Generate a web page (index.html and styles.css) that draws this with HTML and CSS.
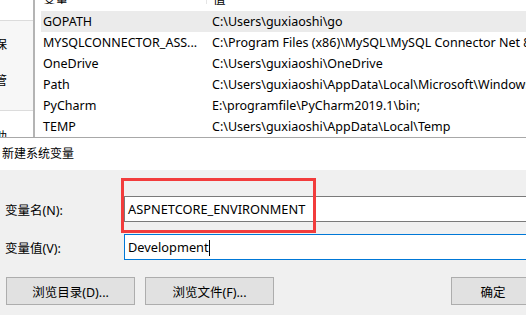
FILE: index.html
```html
<!DOCTYPE html>
<html lang="zh-CN">
<head>
    <meta charset="UTF-8">
    <title>新建系统变量</title>
    <link rel="stylesheet" href="styles.css">
</head>
<body>
    <div class="behind">
        <div class="side">
            <div class="side-top"></div>
            <div class="side-mid">
                <span class="cut c1">保</span>
                <span class="cut c2">管</span>
            </div>
            <div class="side-low">
                <span class="cut c3">助</span>
            </div>
        </div>
        <div class="gutter"></div>
        <div class="list">
            <div class="list-head">
                <span class="col-name">变量</span>
                <span class="col-value">值</span>
            </div>
            <div class="row selected"><span class="col-name">GOPATH</span><span class="col-value">C:\Users\guxiaoshi\go</span></div>
            <div class="row"><span class="col-name">MYSQLCONNECTOR_ASS...</span><span class="col-value">C:\Program Files (x86)\MySQL\MySQL Connector Net 8.0.16\Assemblies</span></div>
            <div class="row"><span class="col-name">OneDrive</span><span class="col-value">C:\Users\guxiaoshi\OneDrive</span></div>
            <div class="row"><span class="col-name">Path</span><span class="col-value">C:\Users\guxiaoshi\AppData\Local\Microsoft\WindowsApps;</span></div>
            <div class="row"><span class="col-name">PyCharm</span><span class="col-value">E:\programfile\PyCharm2019.1\bin;</span></div>
            <div class="row"><span class="col-name">TEMP</span><span class="col-value">C:\Users\guxiaoshi\AppData\Local\Temp</span></div>
        </div>
    </div>

    <div class="dialog">
        <div class="title-bar">新建系统变量</div>
        <div class="dialog-body">
            <div class="field">
                <label class="field-label">变量名(N):</label>
                <div class="input">ASPNETCORE_ENVIRONMENT</div>
            </div>
            <div class="field">
                <label class="field-label">变量值(V):</label>
                <div class="input focused">Development<span class="caret"></span></div>
            </div>
            <div class="buttons">
                <button class="btn">浏览目录(D)...</button>
                <button class="btn">浏览文件(F)...</button>
                <button class="btn btn-ok">确定</button>
            </div>
            <div class="highlight"></div>
        </div>
    </div>
</body>
</html>
```

FILE: styles.css
```css
body {
    margin: 0;
    width: 526px;
    height: 315px;
    overflow: hidden;
    font-family: "Noto Sans", "Noto Sans CJK SC", sans-serif;
    font-size: 12px;
    color: #000;
    background-color: #fff;
}

/* window behind the dialog */
.behind {
    display: flex;
    height: 137px;
    border-bottom: 1px solid #a8a8a8;
    overflow: hidden;
}

.side {
    width: 33px;
    border-right: 2px solid #b4b4b4;
    display: flex;
    flex-direction: column;
    overflow: hidden;
}

.side-top {
    height: 20px;
    border-bottom: 1px solid #dcdcdc;
}

.side-mid {
    height: 89px;
    background-color: #f7f7f7;
    border-bottom: 1px solid #dcdcdc;
    position: relative;
}

.side-low {
    flex: 1;
    position: relative;
}

.cut {
    position: absolute;
    left: -5px;
    font-family: "Noto Sans CJK SC", sans-serif;
    font-size: 12px;
    line-height: 14px;
}

.c1 { top: 16px; }
.c2 { top: 52px; }
.c3 { top: 18px; }

.gutter {
    width: 6px;
}

.list {
    flex: 1;
    overflow: hidden;
    font-size: 12.5px;
}

.list-head {
    display: flex;
    height: 11px;
    line-height: 11px;
    overflow: hidden;
}

.list-head span {
    position: relative;
    top: -7px;
    font-family: "Noto Sans CJK SC", sans-serif;
}

.list-head .col-name {
    border-right: 1px solid #e5e5e5;
}

.row {
    display: flex;
    height: 21px;
    line-height: 21px;
    white-space: nowrap;
}

.row.selected {
    background-color: #ebebeb;
}

.col-name {
    width: 163px;
    padding-left: 2px;
    flex-shrink: 0;
    overflow: hidden;
}

.col-value {
    padding-left: 6px;
    white-space: nowrap;
}

/* dialog */
.dialog {
    height: 177px;
}

.title-bar {
    height: 32px;
    line-height: 30px;
    padding-left: 2px;
    font-family: "Noto Sans CJK SC", sans-serif;
    background-color: #fff;
}

.dialog-body {
    position: relative;
    height: 145px;
    background-color: #f0f0f0;
    padding-top: 26px;
    box-sizing: border-box;
}

.field {
    display: flex;
    align-items: center;
    margin-bottom: 12px;
}

.field-label {
    width: 119px;
    padding-left: 5px;
    font-size: 12.5px;
}

.input {
    flex: 1;
    height: 24px;
    line-height: 24px;
    padding-left: 3px;
    border: 1px solid #7a7a7a;
    border-right: none;
    background-color: #fff;
    white-space: nowrap;
    font-size: 12.8px;
}

.input.focused {
    border-color: #0078d7;
}

.caret {
    display: inline-block;
    width: 1px;
    height: 16px;
    background-color: #000;
    vertical-align: -4px;
}

.buttons {
    display: flex;
    margin-top: 17px;
    padding-left: 6px;
}

.btn {
    width: 129px;
    height: 28px;
    border: 1px solid #adadad;
    background-color: #e1e1e1;
    font-family: "Noto Sans", "Noto Sans CJK SC", sans-serif;
    font-size: 12.5px;
    color: #000;
    padding: 0;
    margin-right: 10px;
    flex-shrink: 0;
}

.btn-ok {
    margin-left: 167px;
    margin-right: 0;
    width: 84px;
}

/* red annotation box */
.highlight {
    position: absolute;
    left: 121px;
    top: 8px;
    width: 189px;
    height: 49px;
    border: 3px solid #f23c3c;
}
```
